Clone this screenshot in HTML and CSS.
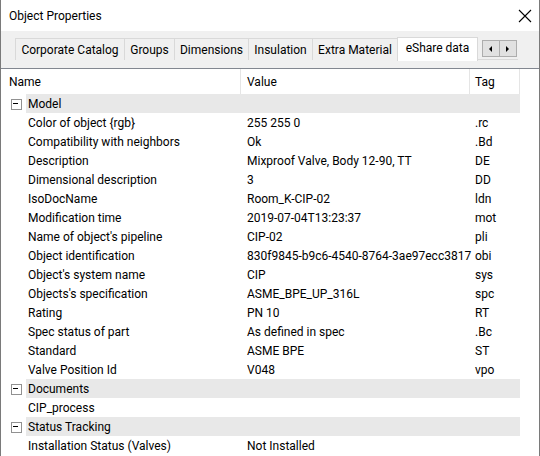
FILE: index.html
```html
<!DOCTYPE html>
<html>
<head>
    <meta charset="utf-8"/>
    <title>Object Properties</title>
    <link rel="stylesheet" href="styles.css">
</head>
<body>
<div class="window">
    <div class="titlebar">
        <span class="title">Object Properties</span>
        <svg class="close" width="14" height="14" viewBox="0 0 14 14">
            <path d="M1 1 L13 13 M13 1 L1 13" stroke="#000" stroke-width="1.1" fill="none"/>
        </svg>
    </div>

    <div class="tabpanel">
        <div class="tabstrip">
            <div class="tab catalog">Corporate Catalog</div>
            <div class="tab groups">Groups</div>
            <div class="tab dimensions">Dimensions</div>
            <div class="tab insulation">Insulation</div>
            <div class="tab extra">Extra Material</div>
            <div class="tab active">eShare data</div>
            <div class="tabscroll">
                <button><svg width="4" height="6"><path d="M3 0 L0 3 L3 6 Z" fill="#000"/></svg></button>
                <button><svg width="4" height="6"><path d="M0 0 L3 3 L0 6 Z" fill="#000"/></svg></button>
            </div>
        </div>
    </div>

    <div class="list">
        <div class="header">
            <div class="col name">Name</div>
            <div class="col value">Value</div>
            <div class="col tag">Tag</div>
        </div>

        <div class="row group"><span class="expander"></span><span class="label">Model</span></div>
        <div class="row"><span></span><span>Color of object {rgb}</span><span>255 255 0</span><span>.rc</span></div>
        <div class="row"><span></span><span>Compatibility with neighbors</span><span>Ok</span><span>.Bd</span></div>
        <div class="row"><span></span><span>Description</span><span>Mixproof Valve, Body 12-90, TT</span><span>DE</span></div>
        <div class="row"><span></span><span>Dimensional description</span><span>3</span><span>DD</span></div>
        <div class="row"><span></span><span>IsoDocName</span><span>Room_K-CIP-02</span><span>ldn</span></div>
        <div class="row"><span></span><span>Modification time</span><span>2019-07-04T13:23:37</span><span>mot</span></div>
        <div class="row"><span></span><span>Name of object's pipeline</span><span>CIP-02</span><span>pli</span></div>
        <div class="row"><span></span><span>Object identification</span><span>830f9845-b9c6-4540-8764-3ae97ecc3817</span><span>obi</span></div>
        <div class="row"><span></span><span>Object's system name</span><span>CIP</span><span>sys</span></div>
        <div class="row"><span></span><span>Objects's specification</span><span>ASME_BPE_UP_316L</span><span>spc</span></div>
        <div class="row"><span></span><span>Rating</span><span>PN 10</span><span>RT</span></div>
        <div class="row"><span></span><span>Spec status of part</span><span>As defined in spec</span><span>.Bc</span></div>
        <div class="row"><span></span><span>Standard</span><span>ASME BPE</span><span>ST</span></div>
        <div class="row"><span></span><span>Valve Position Id</span><span>V048</span><span>vpo</span></div>

        <div class="row group"><span class="expander"></span><span class="label">Documents</span></div>
        <div class="row"><span></span><span>CIP_process</span><span></span><span></span></div>

        <div class="row group"><span class="expander"></span><span class="label">Status Tracking</span></div>
        <div class="row"><span></span><span>Installation Status (Valves)</span><span>Not Installed</span><span></span></div>
    </div>
</div>
</body>
</html>
```

FILE: styles.css
```css
* {
    box-sizing: border-box;
}

html, body {
    margin: 0;
    padding: 0;
    width: 540px;
    height: 456px;
    overflow: hidden;
    background: #fff;
}

body {
    font-family: Roboto, "Noto Sans", sans-serif;
    font-size: 12px;
    color: #000;
}

.window {
    height: 456px;
    border-left: 1px solid #7a7a7a;
    border-right: 1px solid #7a7a7a;
}

/* title bar */
.titlebar {
    height: 31px;
    display: flex;
    align-items: center;
    justify-content: space-between;
    padding: 1px 7px 0 8px;
    background: #fff;
}

.close {
    display: block;
}

/* tabs */
.tabpanel {
    height: 37px;
    background: #f0f0f0;
    padding: 6px 0 0 14px;
}

.tabstrip {
    display: flex;
    align-items: flex-start;
    height: 23px;
    width: 503px;
    border-bottom: 1px solid #d9d9d9;
}

.tab {
    height: 22px;
    margin-top: 1px;
    line-height: 23px;
    text-align: center;
    border: 1px solid #d9d9d9;
    border-bottom: none;
    border-left: none;
    background: #f0f0f0;
    white-space: nowrap;
}

.tab:first-child {
    border-left: 1px solid #d9d9d9;
}

.tab.catalog { width: 110px; }
.tab.groups { width: 50px; }
.tab.dimensions { width: 74px; }
.tab.insulation { width: 64px; }
.tab.extra { width: 85px; }

.tab.active {
    width: 81px;
    height: 24px;
    margin-top: 0;
    margin-left: -1px;
    line-height: 21px;
    background: #fff;
    border-left: 1px solid #d9d9d9;
    position: relative;
    z-index: 1;
}

.tabscroll {
    display: flex;
    margin: 3px 0 0 4px;
}

.tabscroll button {
    width: 18px;
    height: 17px;
    margin: 0 -1px 0 0;
    padding: 0;
    display: flex;
    align-items: center;
    justify-content: center;
    background: #e1e1e1;
    border: 1px solid #adadad;
}

.tabscroll svg {
    display: block;
}

/* list view */
.list {
    border-top: 1px solid #828790;
}

.header {
    display: flex;
    height: 25px;
}

.header .col {
    line-height: 26px;
    border-right: 1px solid #e5e5e5;
}

.header .name {
    width: 240px;
    padding-left: 8px;
}

.header .value {
    width: 229px;
    padding-left: 6px;
}

.header .tag {
    width: 50px;
    padding-left: 5px;
}

.row {
    display: grid;
    grid-template-columns: 25px 215px 229px 50px;
    height: 19px;
    line-height: 21px;
    white-space: nowrap;
}

.row span:nth-child(2) {
    padding-left: 2px;
}

.row span:nth-child(3) {
    padding-left: 6px;
}

.row span:nth-child(4) {
    padding-left: 5px;
}

.row.group .label {
    grid-column: 2 / span 3;
    height: 19px;
    background: #e8e8e8;
}

.expander {
    position: relative;
}

.expander::before {
    content: "";
    position: absolute;
    left: 10px;
    top: 5px;
    width: 9px;
    height: 9px;
    border: 1px solid #919191;
    background: #fff;
}

.expander::after {
    content: "";
    position: absolute;
    left: 12px;
    top: 9px;
    width: 5px;
    height: 1px;
    background: #000;
}
```
